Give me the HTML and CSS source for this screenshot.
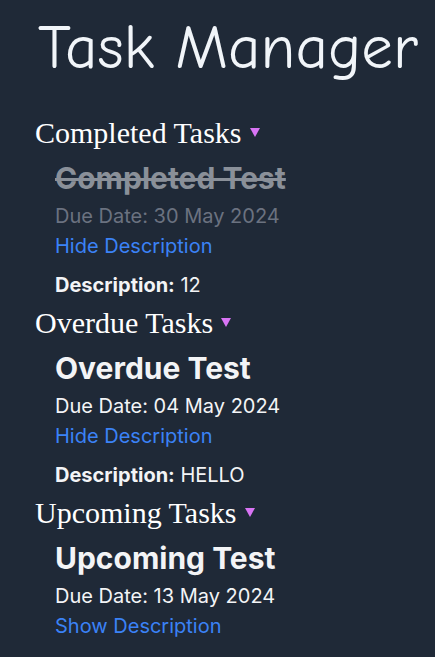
FILE: index.html
```html
<!DOCTYPE html>
<html lang="en">
<head>
<meta charset="utf-8">
<title>Task Manager</title>
<link rel="stylesheet" href="styles.css">
</head>
<body>
<main class="app">
  <h1 class="app-title">Task Manager</h1>

  <section class="group">
    <h2 class="group-title">Completed Tasks <span class="caret"></span></h2>
    <div class="task task-done">
      <h3 class="task-name">Completed Test</h3>
      <p class="task-due">Due Date: 30 May 2024</p>
      <a class="task-toggle" href="#">Hide Description</a>
      <p class="task-desc"><strong>Description:</strong> 12</p>
    </div>
  </section>

  <section class="group">
    <h2 class="group-title">Overdue Tasks <span class="caret"></span></h2>
    <div class="task">
      <h3 class="task-name">Overdue Test</h3>
      <p class="task-due">Due Date: 04 May 2024</p>
      <a class="task-toggle" href="#">Hide Description</a>
      <p class="task-desc"><strong>Description:</strong> HELLO</p>
    </div>
  </section>

  <section class="group">
    <h2 class="group-title">Upcoming Tasks <span class="caret"></span></h2>
    <div class="task">
      <h3 class="task-name">Upcoming Test</h3>
      <p class="task-due">Due Date: 13 May 2024</p>
      <a class="task-toggle" href="#">Show Description</a>
    </div>
  </section>
</main>
</body>
</html>
```

FILE: styles.css
```css
html, body {
  margin: 0;
  padding: 0;
  background: #1f2937;
}
body {
  color: #f3f4f6;
  font-family: Inter, "Liberation Sans", sans-serif;
}
.app {
  padding: 0 0 0 35px;
}
.app-title {
  margin: 0 0 0 3px;
  height: 113px;
  box-sizing: border-box;
  padding-top: 8px;
  font-family: "Comic Sans MS", "Comic Neue", cursive;
  font-weight: 400;
  font-size: 63px;
  line-height: 80px;
  color: #f1f5f9;
  white-space: nowrap;
}
.group {
  padding-bottom: 3px;
}
.group-title {
  margin: 0;
  font-family: "Liberation Serif", serif;
  font-weight: 400;
  font-size: 30px;
  line-height: 40px;
  color: #ffffff;
  display: flex;
  align-items: center;
  gap: 8px;
}
.caret {
  width: 0;
  height: 0;
  border-left: 5px solid transparent;
  border-right: 5px solid transparent;
  border-top: 9px solid #d874f4;
  margin-top: -2px;
}
.task {
  padding: 2px 0 0 20px;
  display: flex;
  flex-direction: column;
  align-items: flex-start;
}
.task-name {
  margin: 0;
  font-size: 30px;
  font-weight: 700;
  line-height: 46px;
  color: #f3f4f6;
}
.task-due {
  margin: 0;
  font-size: 20px;
  line-height: 30px;
}
.task-toggle {
  font-size: 20px;
  line-height: 30px;
  color: #3b82f6;
  text-decoration: none;
}
.task-desc {
  margin: 9px 0 0;
  font-size: 20px;
  line-height: 30px;
}
.task-done .task-name {
  color: #8a9099;
  text-decoration: line-through;
}
.task-done .task-due {
  color: #6b7280;
}
```
